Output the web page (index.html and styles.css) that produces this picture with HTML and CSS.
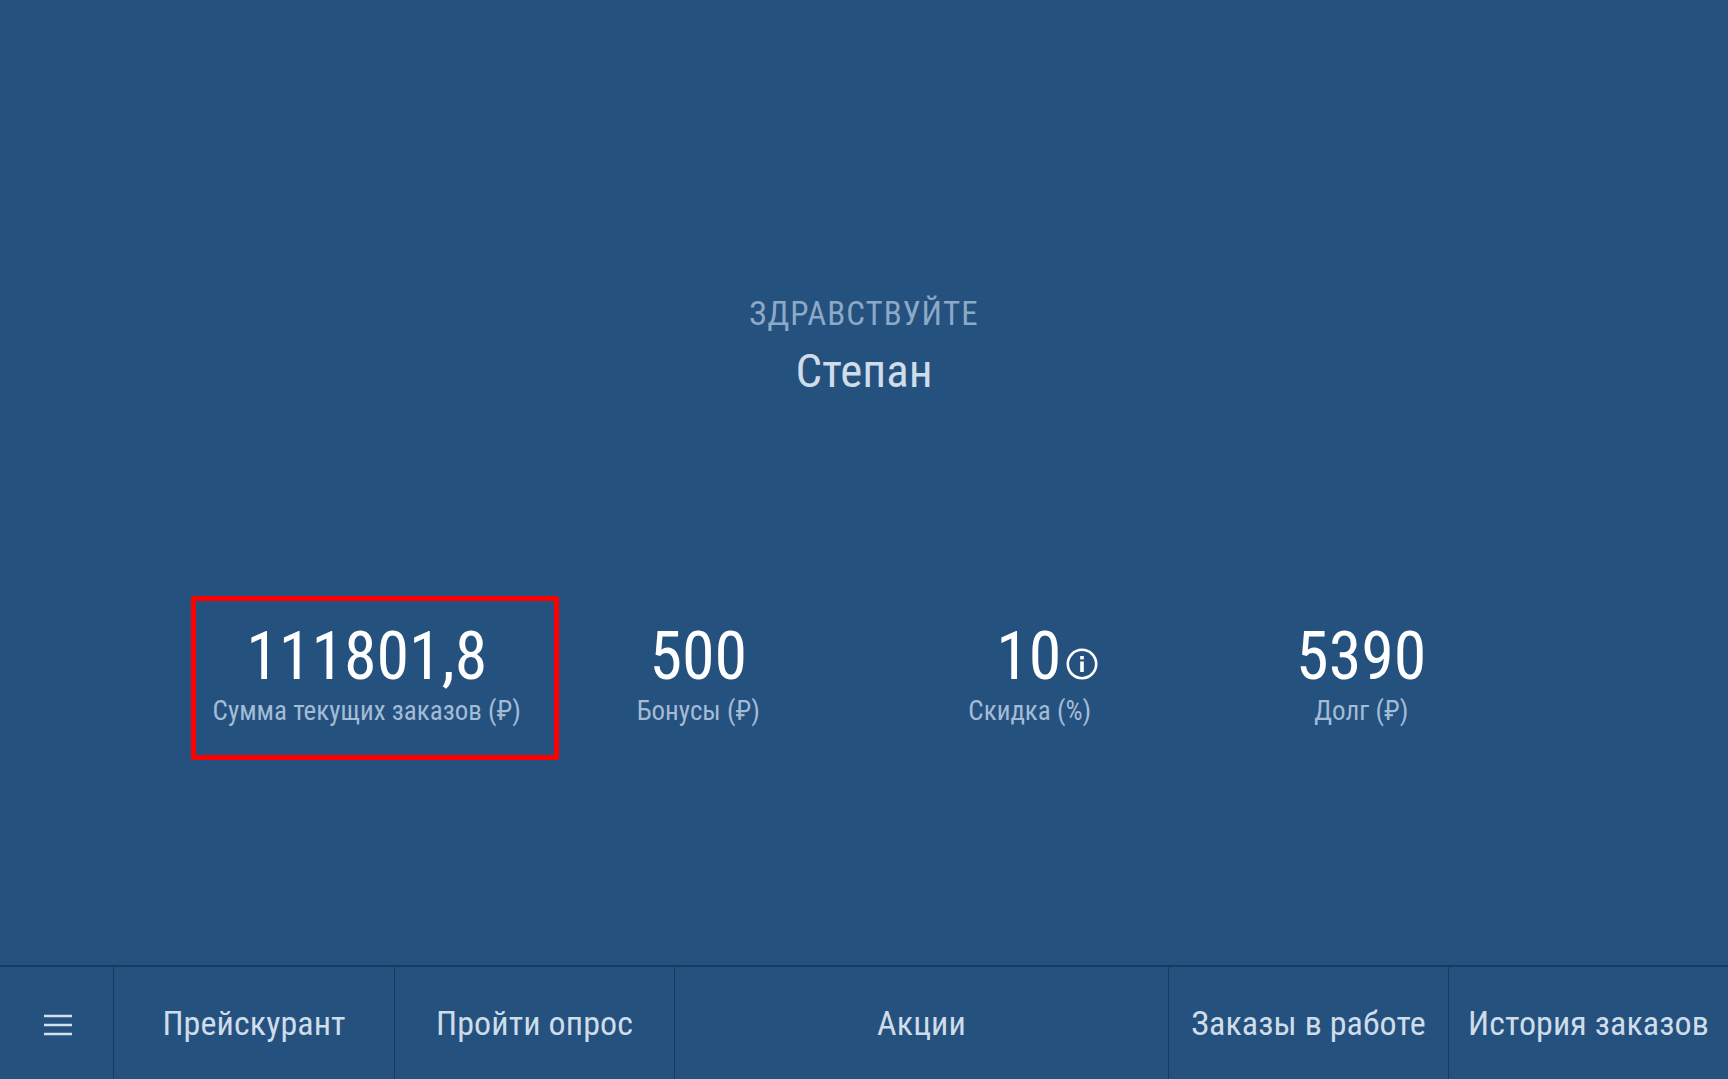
FILE: index.html
```html
<!DOCTYPE html>
<html lang="ru">
<head>
<meta charset="utf-8">
<title>Кабинет</title>
<link rel="stylesheet" href="styles.css">
</head>
<body>
<div class="page">
  <main class="main">
    <section class="greeting">
      <div class="hello">ЗДРАВСТВУЙТЕ</div>
      <div class="name">Степан</div>
    </section>
    <section class="stats">
      <div class="stat stat-marked">
        <div class="value">111801,8</div>
        <div class="label">Сумма текущих заказов (₽)</div>
      </div>
      <div class="stat">
        <div class="value">500</div>
        <div class="label">Бонусы (₽)</div>
      </div>
      <div class="stat">
        <div class="value value-info">10<svg class="info" viewBox="0 0 32 32" aria-hidden="true"><circle cx="16" cy="16" r="14.2" fill="none" stroke="#fff" stroke-width="2.6"/><rect x="14.2" y="13.5" width="3.6" height="10.5" fill="#fff"/><rect x="14.2" y="8" width="3.6" height="3.4" fill="#fff"/></svg></div>
        <div class="label">Скидка (%)</div>
      </div>
      <div class="stat">
        <div class="value">5390</div>
        <div class="label">Долг (₽)</div>
      </div>
    </section>
  </main>
  <nav class="nav">
    <a class="nav-item nav-menu"><svg class="burger" viewBox="0 0 28 22" aria-hidden="true"><path d="M0 2h28M0 11h28M0 20h28" stroke="#d3e0ee" stroke-width="2.6"/></svg></a>
    <a class="nav-item nav-price">Прейскурант</a>
    <a class="nav-item nav-poll">Пройти опрос</a>
    <a class="nav-item nav-promo">Акции</a>
    <a class="nav-item nav-work">Заказы в работе</a>
    <a class="nav-item nav-history">История заказов</a>
  </nav>
</div>
</body>
</html>
```
FILE: styles.css
```css
*, *::after { box-sizing: border-box; }
html, body { margin: 0; height: 100%; }
body {
  background: #25517f;
  font-family: "Roboto", "Liberation Sans", sans-serif;
  font-stretch: 75%;
  overflow: hidden;
}
.page { height: 100vh; display: flex; flex-direction: column; }
.main { flex: 1; padding-top: 291px; display: flex; flex-direction: column; align-items: center; }
.greeting { text-align: center; }
.hello { font-size: 33px; line-height: 46px; letter-spacing: 1px; color: #8ca9c8; }
.name { font-size: 47px; line-height: 68px; color: #cfdcea; }
.stats { margin-top: 215px; width: 1326px; display: grid; grid-template-columns: repeat(4, 1fr); }
.stat { position: relative; text-align: center; }
.stat-marked::after {
  content: "";
  position: absolute;
  left: -10px; top: -24px; width: 368px; height: 164px;
  border: 5px solid #ff0000;
  border-radius: 2px;
}
.value { font-size: 66px; line-height: 74px; color: #fff; }
.value-info { padding-left: 35px; display: flex; justify-content: center; align-items: center; }
.info { width: 32px; height: 32px; margin: 13px 0 0 5px; }
.label { font-size: 27px; line-height: 34px; color: #a3bcd6; }
.nav { height: 114px; flex: none; display: flex; border-top: 2px solid #183a60; }
.nav-item {
  display: flex; align-items: center; justify-content: center; flex: none;
  font-size: 34px; color: #cfdcea; letter-spacing: .1px;
  border-right: 1px solid #183a60;
  white-space: nowrap;
}
.nav-menu { width: 114px; }
.nav-price { width: 281px; }
.nav-poll { width: 280px; }
.nav-promo { width: 494px; }
.nav-work { width: 280px; }
.nav-history { flex: 1; border-right: 0; }
.burger { width: 28px; height: 22px; margin: 4px 0 0 2px; }
```
